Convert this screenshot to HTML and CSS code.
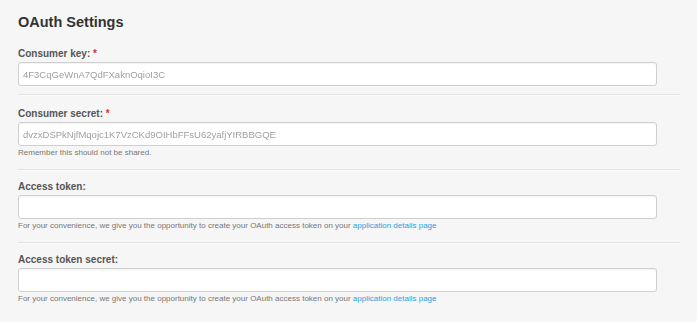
FILE: index.html
```html
<!DOCTYPE html>
<html>
<head>
<meta charset="utf-8">
<link rel="stylesheet" href="styles.css">
</head>
<body>
<div class="panel">
  <h1 class="title">OAuth Settings</h1>
  <div class="section first">
    <div class="label">Consumer key: <span class="req">*</span></div>
    <div class="field"><span class="val">4F3CqGeWnA7QdFXaknOqioI3C</span></div>
  </div>
  <div class="section second">
    <div class="label">Consumer secret: <span class="req">*</span></div>
    <div class="field"><span class="val">dvzxDSPkNjfMqojc1K7VzCKd9OIHbFFsU62yafjYIRBBGQE</span></div>
    <div class="help">Remember this should not be shared.</div>
  </div>
  <div class="section">
    <div class="label">Access token:</div>
    <div class="field"></div>
    <div class="help">For your convenience, we give you the opportunity to create your OAuth access token on your <a class="link" href="#">application details page</a></div>
  </div>
  <div class="section last">
    <div class="label">Access token secret:</div>
    <div class="field"></div>
    <div class="help">For your convenience, we give you the opportunity to create your OAuth access token on your <a class="link" href="#">application details page</a></div>
  </div>
</div>
</body>
</html>
```
FILE: styles.css
```css
html, body {
  margin: 0;
  padding: 0;
  background: #ffffff;
}
body {
  font-family: "Liberation Sans", Arial, sans-serif;
}
.panel {
  width: 697px;
  height: 322px;
  box-sizing: border-box;
  background: #f6f6f6;
  border-bottom-right-radius: 4px;
  padding: 12px 17px 0 18px;
  display: flex;
  flex-direction: column;
}
.title {
  margin: 0;
  font-size: 14.5px;
  line-height: 20px;
  font-weight: bold;
  color: #333333;
}
.section {
  display: flex;
  flex-direction: column;
  padding: 10px 0 10px;
  border-bottom: 1px solid #e4e4e4;
  box-shadow: 0 1px 0 #fbfbfb;
}
.section.first {
  padding-top: 15px;
  padding-bottom: 8px;
}
.section.second {
  padding-top: 12px;
}
.section.last {
  border-bottom: none;
  box-shadow: none;
}
.label {
  font-size: 10px;
  line-height: 14px;
  font-weight: bold;
  color: #555555;
  margin-bottom: 1px;
}
.req {
  color: #d9312b;
}
.field {
  width: 639px;
  height: 24px;
  box-sizing: border-box;
  background: #ffffff;
  border: 1px solid #cfcfcf;
  border-radius: 3px;
  box-shadow: inset 0 1px 1px rgba(0,0,0,0.05);
  padding: 0 4px;
  display: flex;
  align-items: center;
}
.val {
  font-size: 9.5px;
  color: #a0a0a0;
  filter: blur(0.7px);
}
.help {
  font-size: 8px;
  line-height: 12px;
  color: #777777;
  margin-top: 1px;
}
.link {
  color: #2c9fdd;
  text-decoration: none;
}
```
